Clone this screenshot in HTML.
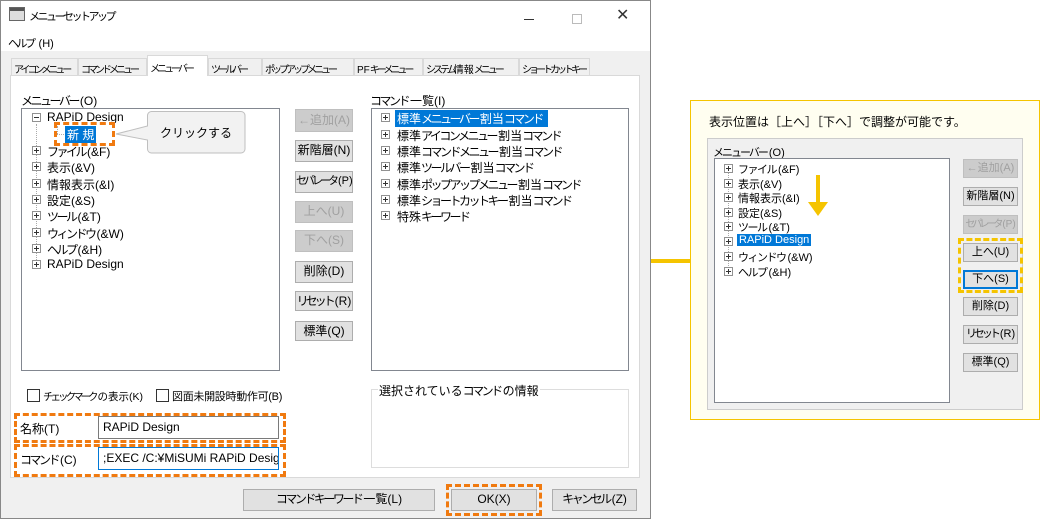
<!DOCTYPE html>
<html><head><meta charset="utf-8"><style>
*{margin:0;padding:0;box-sizing:border-box}
body{width:1044px;height:519px;background:#fff;position:relative;overflow:hidden;font-family:"Liberation Sans","Noto Sans CJK JP",sans-serif;font-size:12px;color:#000}
.a{position:absolute;white-space:nowrap}
.k{letter-spacing:-2.5px;margin-right:2px}
.btn{position:absolute;background:#e1e1e1;border:1px solid #adadad;text-align:center;line-height:18px;font-size:12px;white-space:nowrap}
.dis{color:#a0a0a0;background:#cccccc;border-color:#bfbfbf}
.box{position:absolute;background:#fff;border:1px solid #828790}
.pl{position:absolute;width:9px;height:9px;border:1px solid #919191;background:#fff}
.pl:before{content:"";position:absolute;left:1px;top:3px;width:5px;height:1px;background:#333}
.pl.p:after{content:"";position:absolute;left:3px;top:1px;width:1px;height:5px;background:#333}
.dash{position:absolute;border:3px dashed #f07a10}
.ydash{position:absolute;border:3px dashed #f5c400}
.sel{background:#0078d7;color:#fff;padding:0 2px}
.tabs div{border:1px solid #d9d9d9;background:#f0f0f0;padding:2px 2px 0;letter-spacing:-3px;font-size:10px;overflow:hidden;white-space:nowrap}
.tabs div span{letter-spacing:0}
</style></head><body>
<div class="a" style="left:0;top:0;width:651px;height:519px;border:1px solid #888;background:#f0f0f0"></div>
<div class="a" style="left:1px;top:1px;width:649px;height:32px;background:#fff"></div>
<div class="a" style="left:9px;top:7px;width:16px;height:14px;border:1px solid #666;background:#ddd"><div style="height:3px;background:#555"></div></div>
<div class="a" style="left:29px;top:8px;font-size:11px"><span class="k">メニューセットアップ</span></div>
<div class="a" style="left:524px;top:19px;width:10px;height:1px;background:#333"></div>
<div class="a" style="left:572px;top:14px;width:10px;height:10px;border:1px solid #bbb"></div>
<div class="a" style="left:616px;top:5px;font-size:16px;color:#333">✕</div>
<div class="a" style="left:1px;top:33px;width:649px;height:18px;background:#fff"></div>
<div class="a" style="left:8px;top:35px;font-size:11px"><span class="k">ヘルプ</span> (H)</div>
<div class="a" style="left:10px;top:75px;width:630px;height:403px;background:#fff;border:1px solid #d9d9d9"></div>
<div class="a tabs" style="left:11px;top:58px;height:18px;display:flex">
<div style="width:67px">アイコンメニュー</div>
<div style="width:69px">コマンドメニュー</div>
<div style="border-bottom:none;background:#fff;width:61px;margin-top:-3px;height:21px;padding-top:4px">メニューバー</div>
<div style="width:54px">ツールバー</div>
<div style="width:92px">ポップアップメニュー</div>
<div style="width:69px"><span>PF</span>キーメニュー</div>
<div style="width:96px">システム<span>情報</span>メニュー</div>
<div style="width:71px">ショートカットキー</div>
</div>
<div class="a" style="left:21px;top:92px"><span class="k">メニューバー</span>(O)</div>
<div class="box" style="left:21px;top:108px;width:259px;height:263px"></div>
<div class="a" style="left:36px;top:124px;width:1px;height:142px;border-left:1px dotted #aaa"></div>
<div class="a" style="left:57px;top:126px;width:1px;height:8px;border-left:1px dotted #aaa"></div>
<div class="a" style="left:57px;top:134px;width:7px;height:1px;border-top:1px dotted #aaa"></div>
<div class="pl" style="left:32px;top:113px"></div><div class="a" style="left:47px;top:110px">RAPiD Design</div>
<div class="a sel" style="left:65px;top:126px">新 規</div>
<div class="dash" style="left:54px;top:122px;width:61px;height:24px"></div>
<div class="pl p" style="left:32px;top:146px"></div><div class="a" style="left:47px;top:143px"><span class="k">ファイル</span>(&amp;F)</div>
<div class="pl p" style="left:32px;top:162px"></div><div class="a" style="left:47px;top:159px">表示(&amp;V)</div>
<div class="pl p" style="left:32px;top:179px"></div><div class="a" style="left:47px;top:176px">情報表示(&amp;I)</div>
<div class="pl p" style="left:32px;top:195px"></div><div class="a" style="left:47px;top:192px">設定(&amp;S)</div>
<div class="pl p" style="left:32px;top:211px"></div><div class="a" style="left:47px;top:208px"><span class="k">ツール</span>(&amp;T)</div>
<div class="pl p" style="left:32px;top:228px"></div><div class="a" style="left:47px;top:225px"><span class="k">ウィンドウ</span>(&amp;W)</div>
<div class="pl p" style="left:32px;top:244px"></div><div class="a" style="left:47px;top:241px"><span class="k">ヘルプ</span>(&amp;H)</div>
<div class="pl p" style="left:32px;top:260px"></div><div class="a" style="left:47px;top:257px">RAPiD Design</div>
<svg class="a" style="left:110px;top:110px" width="140" height="46"><path d="M43.5 1.5H131a4 4 0 0 1 4 4V39a4 4 0 0 1-4 4H41.5a4 4 0 0 1-4-4V30L6 24 37.5 16V5.5a4 4 0 0 1 4-4z" fill="#f2f2f2" stroke="#bfbfbf"/></svg>
<div class="a" style="left:160px;top:124px">クリックする</div>
<div class="btn dis" style="left:295px;top:109px;width:58px;height:23px;line-height:21px">←追加(A)</div>
<div class="btn" style="left:295px;top:140px;width:58px;height:22px">新階層(N)</div>
<div class="btn" style="left:295px;top:171px;width:58px;height:22px;font-size:11px"><span class="k" style="letter-spacing:-3px">セパレータ</span>(P)</div>
<div class="btn dis" style="left:295px;top:201px;width:58px;height:22px">上へ(U)</div>
<div class="btn dis" style="left:295px;top:230px;width:58px;height:22px">下へ(S)</div>
<div class="btn" style="left:295px;top:261px;width:58px;height:22px">削除(D)</div>
<div class="btn" style="left:295px;top:291px;width:58px;height:20px"><span class="k" style="letter-spacing:-3px">リセット</span>(R)</div>
<div class="btn" style="left:295px;top:321px;width:58px;height:20px">標準(Q)</div>
<div class="a" style="left:370px;top:92px"><span class="k">コマンド</span>一覧(I)</div>
<div class="box" style="left:371px;top:108px;width:258px;height:263px"></div>
<div class="pl p" style="left:381px;top:113px"></div><div class="a sel" style="left:395px;top:110px;padding-right:4px">標準<span class="k">メニューバー</span>割当<span class="k">コマンド</span></div>
<div class="pl p" style="left:381px;top:130px"></div><div class="a" style="left:397px;top:127px">標準<span class="k">アイコンメニュー</span>割当<span class="k">コマンド</span></div>
<div class="pl p" style="left:381px;top:146px"></div><div class="a" style="left:397px;top:143px">標準<span class="k">コマンドメニュー</span>割当<span class="k">コマンド</span></div>
<div class="pl p" style="left:381px;top:162px"></div><div class="a" style="left:397px;top:159px">標準<span class="k">ツールバー</span>割当<span class="k">コマンド</span></div>
<div class="pl p" style="left:381px;top:179px"></div><div class="a" style="left:397px;top:176px">標準<span class="k">ポップアップメニュー</span>割当<span class="k">コマンド</span></div>
<div class="pl p" style="left:381px;top:195px"></div><div class="a" style="left:397px;top:192px">標準<span class="k">ショートカットキー</span>割当<span class="k">コマンド</span></div>
<div class="pl p" style="left:381px;top:211px"></div><div class="a" style="left:397px;top:208px">特殊<span class="k">キーワード</span></div>
<div class="a" style="left:27px;top:389px;width:13px;height:13px;border:1px solid #333;background:#fff"></div>
<div class="a" style="left:43px;top:389px;font-size:10.5px"><span class="k" style="letter-spacing:-3px">チェックマーク</span>の表示(K)</div>
<div class="a" style="left:156px;top:389px;width:13px;height:13px;border:1px solid #333;background:#fff"></div>
<div class="a" style="left:172px;top:388px;font-size:11px;letter-spacing:-0.3px">図面未開設時動作可(B)</div>
<div class="a" style="left:371px;top:389px;width:258px;height:79px;border:1px solid #ddd"></div>
<div class="a" style="left:378px;top:382px;background:#fff;padding:0 1px">選択されている<span class="k">コマンド</span>の情報</div>
<div class="a" style="left:20px;top:420px">名称(T)</div>
<div class="a" style="left:98px;top:416px;width:181px;height:23px;border:1px solid #7a7a7a;background:#fff;padding:3px 4px">RAPiD Design</div>
<div class="a" style="left:20px;top:451px"><span class="k">コマンド</span>(C)</div>
<div class="a" style="left:98px;top:447px;width:181px;height:23px;border:1px solid #0078d7;background:#fff;padding:3px 4px;overflow:hidden">;EXEC /C:¥MiSUMi RAPiD Design</div>
<div class="dash" style="left:14px;top:413px;width:272px;height:30px"></div>
<div class="dash" style="left:14px;top:444px;width:272px;height:33px"></div>
<div class="btn" style="left:243px;top:489px;width:192px;height:22px"><span class="k">コマンドキーワード</span>一覧(L)</div>
<div class="btn" style="left:451px;top:489px;width:86px;height:22px">OK(X)</div>
<div class="btn" style="left:552px;top:489px;width:85px;height:22px"><span class="k">キャンセル</span>(Z)</div>
<div class="dash" style="left:446px;top:484px;width:96px;height:32px"></div>
<!-- right panel -->
<div class="a" style="left:651px;top:259px;width:40px;height:4px;background:#f5c400"></div>
<div class="a" style="left:690px;top:100px;width:350px;height:320px;background:#fffef0;border:1px solid #f5c400"></div>
<div class="a" style="left:709px;top:113px;font-size:12px">表示位置は［上へ］［下へ］で調整が可能です。</div>
<div class="a" style="left:707px;top:138px;width:316px;height:272px;background:#f0f0f0;border:1px solid #ccc"></div>
<div class="a" style="left:713px;top:144px;font-size:11px"><span class="k" style="letter-spacing:-2px">メニューバー</span>(O)</div>
<div class="box" style="left:714px;top:158px;width:236px;height:245px"></div>
<div class="a" style="left:728px;top:172px;width:1px;height:100px;border-left:1px dotted #aaa"></div>
<div class="pl p" style="left:724px;top:164px"></div><div class="a" style="left:738px;top:161px;font-size:11px"><span class="k" style="letter-spacing:-1.5px">ファイル</span>(&amp;F)</div>
<div class="pl p" style="left:724px;top:179px"></div><div class="a" style="left:738px;top:176px;font-size:11px">表示(&amp;V)</div>
<div class="pl p" style="left:724px;top:193px"></div><div class="a" style="left:738px;top:190px;font-size:11px">情報表示(&amp;I)</div>
<div class="pl p" style="left:724px;top:208px"></div><div class="a" style="left:738px;top:205px;font-size:11px">設定(&amp;S)</div>
<div class="pl p" style="left:724px;top:222px"></div><div class="a" style="left:738px;top:219px;font-size:11px"><span class="k" style="letter-spacing:-1.5px">ツール</span>(&amp;T)</div>
<div class="pl p" style="left:724px;top:237px"></div><div class="a sel" style="left:737px;top:234px;font-size:11px">RAPiD Design</div>
<div class="pl p" style="left:724px;top:252px"></div><div class="a" style="left:738px;top:249px;font-size:11px"><span class="k" style="letter-spacing:-1.5px">ウィンドウ</span>(&amp;W)</div>
<div class="pl p" style="left:724px;top:267px"></div><div class="a" style="left:738px;top:264px;font-size:11px"><span class="k" style="letter-spacing:-1.5px">ヘルプ</span>(&amp;H)</div>
<div class="a" style="left:816px;top:175px;width:4px;height:28px;background:#f5c400"></div>
<div class="a" style="left:808px;top:202px;width:0;height:0;border-left:10px solid transparent;border-right:10px solid transparent;border-top:14px solid #f5c400"></div>
<div class="btn dis" style="left:963px;top:159px;width:55px;height:19px;font-size:11px;line-height:17px">←追加(A)</div>
<div class="btn" style="left:963px;top:187px;width:55px;height:19px;font-size:11px;line-height:17px">新階層(N)</div>
<div class="btn dis" style="left:963px;top:215px;width:55px;height:19px;font-size:10px;line-height:17px"><span class="k" style="letter-spacing:-3px">セパレータ</span>(P)</div>
<div class="btn" style="left:963px;top:243px;width:55px;height:19px;font-size:11px;line-height:17px">上へ(U)</div>
<div class="btn" style="left:963px;top:270px;width:55px;height:19px;font-size:11px;line-height:15px;border:2px solid #0078d7">下へ(S)</div>
<div class="btn" style="left:963px;top:297px;width:55px;height:19px;font-size:11px;line-height:17px">削除(D)</div>
<div class="btn" style="left:963px;top:325px;width:55px;height:19px;font-size:11px;line-height:17px"><span class="k" style="letter-spacing:-3px">リセット</span>(R)</div>
<div class="btn" style="left:963px;top:353px;width:55px;height:19px;font-size:11px;line-height:17px">標準(Q)</div>
<div class="ydash" style="left:958px;top:238px;width:65px;height:55px"></div>
</body></html>
